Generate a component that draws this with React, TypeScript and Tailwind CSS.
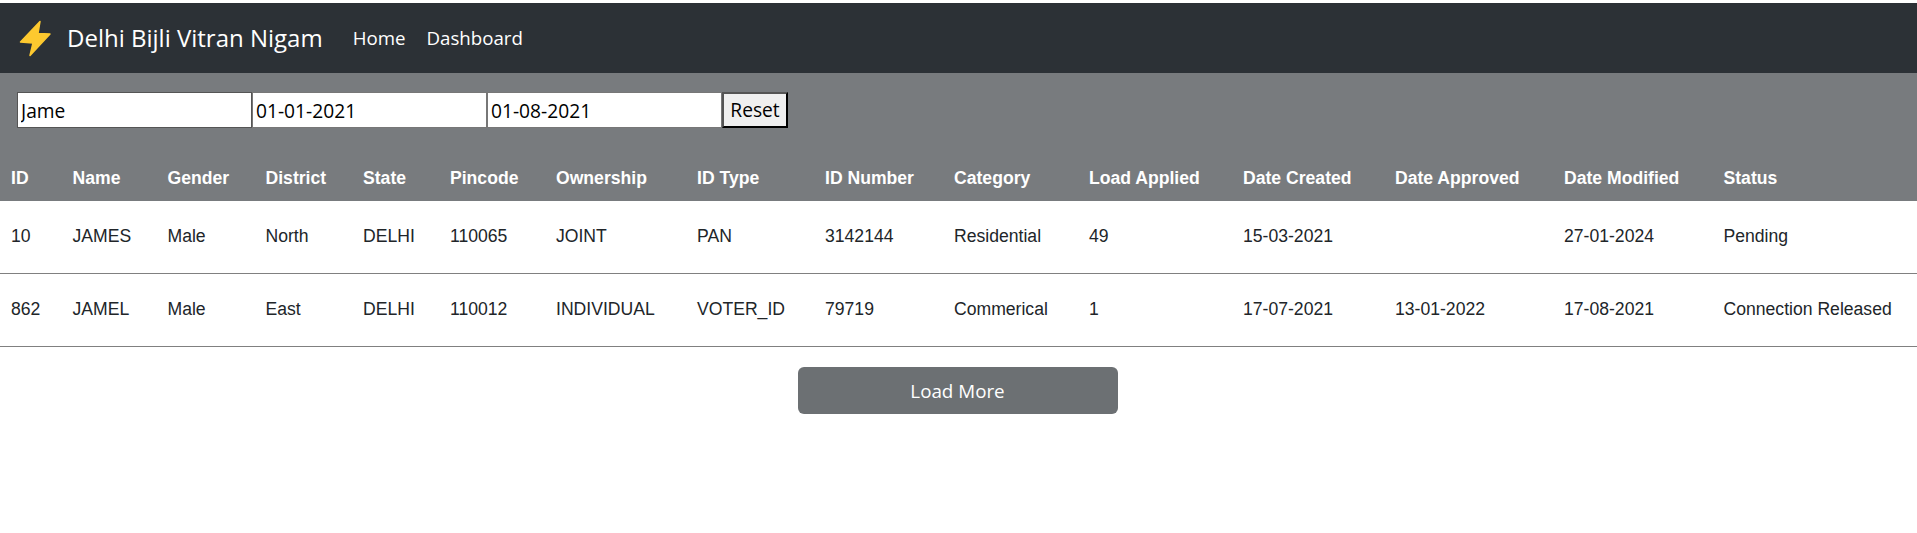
const cols = [
  { label: "ID", w: 61.5 }, { label: "Name", w: 95 }, { label: "Gender", w: 98 }, { label: "District", w: 97.5 },
  { label: "State", w: 87 }, { label: "Pincode", w: 106 }, { label: "Ownership", w: 141 }, { label: "ID Type", w: 128 },
  { label: "ID Number", w: 129 }, { label: "Category", w: 135 }, { label: "Load Applied", w: 154 }, { label: "Date Created", w: 152 },
  { label: "Date Approved", w: 169 }, { label: "Date Modified", w: 159.5 }, { label: "Status", w: 204.5 },
];
const rows = [
  ["10", "JAMES", "Male", "North", "DELHI", "110065", "JOINT", "PAN", "3142144", "Residential", "49", "15-03-2021", "", "27-01-2024", "Pending"],
  ["862", "JAMEL", "Male", "East", "DELHI", "110012", "INDIVIDUAL", "VOTER_ID", "79719", "Commerical", "1", "17-07-2021", "13-01-2022", "17-08-2021", "Connection Released"],
];
const ui = { fontFamily: '"Open Sans", "Noto Sans", sans-serif' };

export default function App() {
  return (
    <div className="min-h-[533px] bg-white pt-[3px] text-[#212529]" style={ui}>
      <nav className="flex h-[70px] items-center bg-[#2c3136] pl-[19px]">
        <svg width="33" height="38" viewBox="0 0 33 38" className="mr-[15px]">
          <path d="M21 2.5 L1.5 23 L14 24 L11 36.5 L31 15 L19 14.5 Z" fill="#fdc92f" stroke="#fdc92f" strokeWidth="1.5" strokeLinejoin="round" />
        </svg>
        <span className="text-[24px] leading-none text-white">Delhi Bijli Vitran Nigam</span>
        <a className="ml-[30px] text-[18.7px] leading-none text-white">Home</a>
        <a className="ml-[21px] text-[18.7px] leading-none text-white">Dashboard</a>
      </nav>
      <div className="flex h-[128px] flex-col bg-[#787b7e]">
        <div className="flex items-start pl-[17px] pt-[19px]">
          <input readOnly value="Jame" className="h-[36px] w-[235px] border border-[#555] bg-white px-[3px] text-[19.2px] text-black outline-none" style={ui} />
          <input readOnly value="01-01-2021" className="h-[36px] w-[235px] border border-[#777] bg-white px-[3px] text-[19.2px] text-black outline-none" style={ui} />
          <input readOnly value="01-08-2021" className="h-[36px] w-[235px] border border-[#777] bg-white px-[3px] text-[19.2px] text-black outline-none" style={ui} />
          <button className="h-[36px] w-[66px] border-2 border-t-[#555] border-l-[#555] border-r-black border-b-black bg-[#f0f0f0] pt-px text-[19.2px] text-black" style={ui}>Reset</button>
        </div>
      </div>
      <table className="-mt-[47px] w-[1917px] table-fixed border-separate border-spacing-0 text-[17.6px]" style={{ fontFamily: '"Liberation Sans", Arial, sans-serif' }}>
        <colgroup>
          {cols.map((c) => <col key={c.label} style={{ width: c.w }} />)}
        </colgroup>
        <thead>
          <tr className="h-[47px] bg-[#787b7e] text-white">
            {cols.map((c) => <th key={c.label} className="pl-[11px] pt-[2px] text-left font-bold">{c.label}</th>)}
          </tr>
        </thead>
        <tbody>
          {rows.map((r) => (
            <tr key={r[0]} className="h-[73px] text-[#212529]">
              {r.map((v, i) => <td key={i} className="border-b border-[#808080] pb-[2px] pl-[11px] whitespace-nowrap">{v}</td>)}
            </tr>
          ))}
        </tbody>
      </table>
      <div className="flex justify-center pt-5 pr-[2px]">
        <button className="h-[47px] w-[320px] rounded-[6px] bg-[#6c7073] pt-[2px] text-[18.8px] text-white" style={ui}>Load More</button>
      </div>
    </div>
  );
}
